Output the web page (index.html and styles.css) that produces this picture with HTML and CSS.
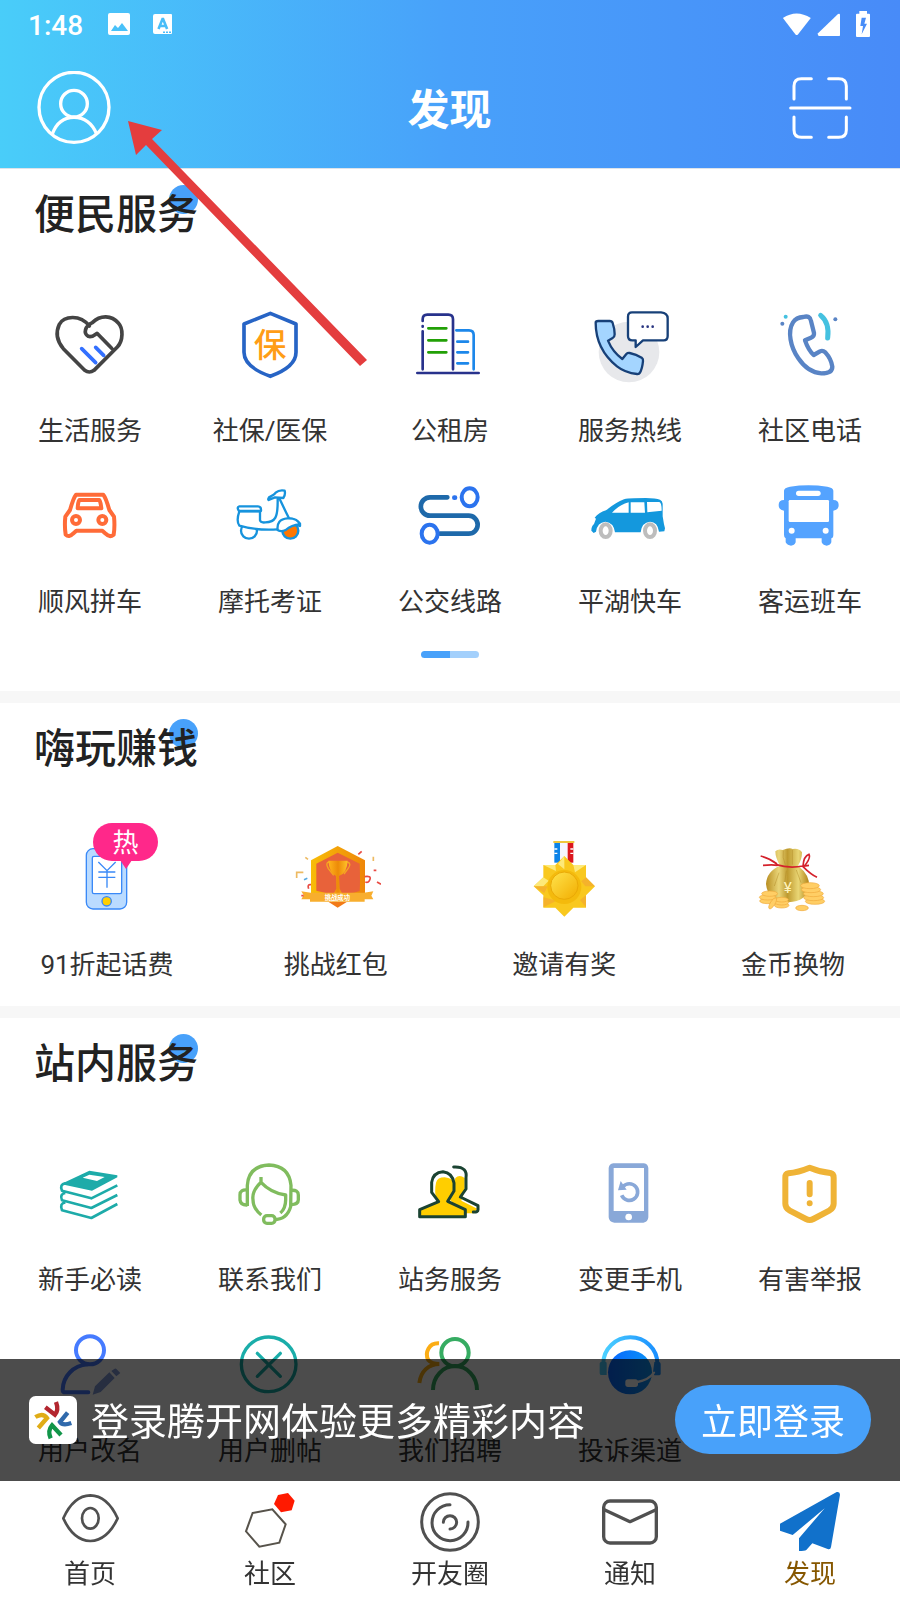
FILE: index.html
```
<!DOCTYPE html>
<html lang="zh-CN">
<head>
	<meta charset="utf-8">
	<title>发现</title>
	<meta name="viewport" content="width=device-width, initial-scale=1">
	<link rel="stylesheet" href="styles.css">
</head>
<body>
	<header class="top">
		<div class="status">
			<span class="clock">1:48</span>
			<svg class="status-icon" viewBox="0 0 24 24">
				<path fill="#fff" fill-rule="evenodd" d="M3 1h18a2 2 0 0 1 2 2v18a2 2 0 0 1-2 2H3a2 2 0 0 1-2-2V3a2 2 0 0 1 2-2zM4 19h17l-6-8-4 5-3-3z"/>
			</svg>
			<svg class="status-icon status-app" viewBox="0 0 24 24">
				<path fill="#fff" fill-rule="evenodd" d="M4 2h16a1 1 0 0 1 1 1v18a1 1 0 0 1-1 1H4a2 2 0 0 1-2-2V4a2 2 0 0 1 2-2zM12 19.500v1.500h2v-1.500zM15 19.500v1.500h2v-1.500zM18 19.500v1.500h2v-1.500z"/>
				<path fill="none" stroke="#49bdf8" stroke-width="2.600" d="M7.500 17L11.500 7h.6l4 10M9 14h6"/>
			</svg>
			<svg class="status-icon status-wifi" viewBox="992 30 96 80">
				<path fill="#fff" d="M993 50Q1038 20 1086 50L1043 105q-4 4-8 0z"/>
			</svg>
			<svg class="status-icon" viewBox="1101 36 72 72">
				<path fill="#fff" d="M1104 100l60-58q6-2 6 2v62q0 2-2 2h-62q-4-4-2-8z"/>
			</svg>
			<svg class="status-icon status-battery" viewBox="1215 28 48 82">
				<path fill="#fff" fill-rule="evenodd" d="M1228 30h23v8h6q3 0 3 3v64q0 3-3 3h-36q-3 0-3-3V41q0-3 3-3h7zM1235 50l-4 25h8l-4 25 16-32h-8l5-18z"/>
			</svg>
		</div>
		<div class="title-bar">
			<button class="icon-btn" aria-label="我的">
				<svg class="avatar" viewBox="112 213 222 222">
					<g fill="none" stroke="#fff" stroke-width="10">
						<circle cx="223" cy="322" r="105"/>
						<circle cx="223" cy="311" r="40"/>
						<path d="M158 402c12-33 36-50 65-50s54 17 68 50"/>
					</g>
				</svg>
			</button>
			<h1>发现</h1>
			<button class="icon-btn scan-btn" aria-label="扫一扫">
				<svg class="scan" viewBox="1014 229 192 192">
					<g fill="none" stroke="#fff" stroke-width="9" stroke-linecap="round">
						<path d="M1032 298v-39q0-22 22-22h30M1136 237h30q23 0 23 22v39M1032 352v39q0 22 22 22h30M1136 413h30q23 0 23-22v-39M1022 325h178"/>
					</g>
				</svg>
			</button>
		</div>
	</header>

	<main>
		<section class="panel">
			<h2>便民服务</h2>
			<div class="grid">
				<a class="item" href="#">
					<svg class="icon" viewBox="135 27 270 270">
						<g fill="none" stroke-width="11" stroke-linecap="round" stroke-linejoin="round">
							<path stroke="#3370ff" d="M245 176l42 42M287 172l24 24"/>
							<path stroke="#444" d="M268 108c-28-36-76-30-90-5-12 26-6 52 12 73l64 65q14 10 28 0l70-70c18-19 18-56 3-72-20-24-54-25-78-1-22 10-28 32-12 41 12 4 20-6 26-9l44 45"/>
						</g>
					</svg>
					<span>生活服务</span>
				</a>
				<a class="item" href="#">
					<svg class="icon" viewBox="675 27 270 270">
						<path fill="#fff" stroke="#2764c5" stroke-width="11" stroke-linejoin="round" d="M811 70l77 32v85q0 44-77 72-79-28-79-72v-85z"/>
						<text class="glyph glyph-bao" x="810" y="201">保</text>
					</svg>
					<span>社保/医保</span>
				</a>
				<a class="item" href="#">
					<svg class="icon" viewBox="15 -3 270 270">
						<g fill="none" stroke-width="8" stroke-linecap="round">
							<path stroke="#28328c" d="M68 63v-5q0-14 14-14h63q14 0 14 14v150M68 78v2M68 94v114M52 219h184"/>
							<path stroke="#22a006" d="M85 85h54M85 121h54M85 157h54"/>
							<path stroke="#1c87ea" d="M169 91h38q14 0 14 14v103M172 125h32M172 157h32M172 190h32"/>
						</g>
					</svg>
					<span>公租房</span>
				</a>
				<a class="item" href="#">
					<svg class="icon" viewBox="405 27 270 270">
						<circle cx="537" cy="186" r="91" fill="#e7e8eb"/>
						<g stroke="#174078" stroke-width="7" stroke-linejoin="round">
							<path fill="#a4d5ff" d="M437 98q0-5 8-5h34q7 0 9 6 6 18 6 34 0 8-6 11l-14 8q14 34 43 55l12-15q4-4 10-3 20 4 36 14 5 4 4 10-2 22-9 35-3 5-9 4-36-4-60-23-64-52-64-131z"/>
							<path fill="#fff" d="M546 67h87q20 2 20 18v53q0 13-12 13h-62l-22 20v-20h-10q-13 0-13-13V80q0-13 12-13z"/>
						</g>
						<path fill="none" stroke="#283480" stroke-width="8" stroke-linecap="round" d="M578 110h0M593 110h0M608 110h0"/>
					</svg>
					<span>服务热线</span>
				</a>
				<a class="item" href="#">
					<svg class="icon" viewBox="945 27 270 270">
						<g fill="none" stroke-linecap="round" stroke-linejoin="round">
							<path stroke="#5984c5" stroke-width="13" d="M1060 81q20-6 23 12l9 36q1 10-9 14l-18 8q10 29 26 44l19-11q8-4 16 3 18 20 21 43 0 20-33 20-40-2-69-45c-24-34-33-81-16-108 8-12 17-15 31-16z"/>
							<path stroke="#45c1e0" stroke-width="15" d="M1112 76q27 22 21 68"/>
						</g>
						<circle cx="1007" cy="80" r="6" fill="#45c1e0"/>
						<circle cx="997" cy="101" r="6" fill="#5984c5"/>
						<circle cx="1156" cy="88" r="6" fill="#5984c5"/>
					</svg>
					<span>社区电话</span>
				</a>
				<a class="item" href="#">
					<svg class="icon" viewBox="135 540 270 270">
						<g fill="none" stroke="#ff6b38" stroke-width="12" stroke-linejoin="round">
							<path d="M228 614h82q8 10 18 46l14 20q3 30-1 54-12 10-24-3l-10-9h-78l-10 9q-12 13-22 3-4-26-1-54l14-20q10-36 18-46z"/>
							<path d="M238 630h60q4 6 6 25h-71q1-19 5-25z"/>
							<circle cx="228" cy="690" r="12"/>
							<circle cx="307" cy="690" r="12"/>
						</g>
					</svg>
					<span>顺风拼车</span>
				</a>
				<a class="item" href="#">
					<svg class="icon" viewBox="675 540 270 270">
						<g fill="#fff" stroke="#1693dd" stroke-width="7" stroke-linejoin="round">
							<circle cx="747" cy="722" r="24"/>
							<circle cx="871" cy="722" r="24" fill="#ff7700"/>
							<path d="M718 664h62v27q2 8 16 6c30 0 38-14 37-70l5-2q18 38 29 60 20 2 33 16v7q-22-8-44 10l-23 0q-64 4-115-11-10-14 0-43z"/>
							<path d="M718 649h56q10 0 9 14h-66q-8-12 1-14zM806 630l19-8 25 2q7-10 4-22-17-3-27 6-4 6-20 14-4 6-1 8zM833 720q-4-32 29-35 32-1 37 18-24 1-42 17-14 7-24 0z"/>
						</g>
					</svg>
					<span>摩托考证</span>
				</a>
				<a class="item" href="#">
					<svg class="icon" viewBox="15 510 270 270">
						<g fill="none" stroke="#1e69aa" stroke-width="14" stroke-linecap="round">
							<path d="M142 592H90a27 27 0 0 0 0 55h116a27 27 0 0 1 0 54h-86"/>
							<g stroke="#2b73ee">
								<path d="M163 593h2"/>
								<ellipse cx="209" cy="592" rx="24" ry="27" stroke-width="12"/>
								<ellipse cx="89" cy="701" rx="24" ry="27" stroke-width="12"/>
							</g>
						</g>
					</svg>
					<span>公交线路</span>
				</a>
				<a class="item" href="#">
					<svg class="icon" viewBox="405 540 270 270">
						<path fill="#1498dd" d="M424 722q0-14 8-20l6-16-4-3q12-15 34-22 30-24 54-33 10-3 30-3 60-4 78 4 7 3 8 12v38l4 24 3 12-2 9-16 1q-4-30-27-30-25 2-28 32h-77q-4-30-29-32-24 2-28 30l-7 4z"/>
						<path fill="#fff" d="M486 668q22-24 50-31v31zM542 637h41l2 31h-43zM591 636h37q7 2 7 26l-43 5z"/>
						<g fill="#fff" stroke="#bdbdbd" stroke-width="12">
							<ellipse cx="467" cy="722" rx="15" ry="19"/>
							<ellipse cx="600" cy="722" rx="15" ry="19"/>
						</g>
					</svg>
					<span>平湖快车</span>
				</a>
				<a class="item" href="#">
					<svg class="icon" viewBox="945 540 270 270">
						<path fill="#54a3ff" d="M1002 602q0-9 18-12 55-8 112 0 18 3 18 12v28q16 0 16 15t-16 17v72q0 10-6 11v12q-4 10-14 10t-15-10v-12h-78v12q-4 10-14 10t-16-10v-12q-5-2-5-11v-72q-16-2-16-17t16-15z"/>
						<rect x="1038" y="602" width="74" height="16" rx="8" fill="#fff"/>
						<rect x="1016" y="630" width="121" height="66" rx="4" fill="#fff"/>
						<circle cx="1025" cy="722" r="9" fill="#fff"/>
						<circle cx="1127" cy="722" r="9" fill="#fff"/>
					</svg>
					<span>客运班车</span>
				</a>
			</div>
			<div class="pager"></div>
		</section>

		<section class="panel">
			<h2>嗨玩赚钱</h2>
			<div class="row">
				<a class="item" href="#">
					<svg class="icon" viewBox="186 639 270 270">
						<g stroke="#3a89f7" stroke-width="4">
							<rect x="259" y="686" width="121" height="181" rx="20" fill="#badbff"/>
							<rect x="277" y="709" width="88" height="112" rx="5" fill="#fff"/>
							<path fill="none" d="M295 726l26 26 26-26M321 752v51M295 756h51M295 772h51"/>
							<circle cx="320" cy="844" r="14" fill="#ffce00"/>
						</g>
					</svg>
					<span>91折起话费</span>
					<b class="hot">热</b>
				</a>
				<a class="item" href="#">
					<svg class="icon" viewBox="871 639 270 270">
						<defs>
							<linearGradient id="rim" x2="1"><stop stop-color="#f8bd08"/><stop offset="1" stop-color="#ee8609"/></linearGradient>
							<linearGradient id="cup" x2="1"><stop stop-color="#ffb51c"/><stop offset=".5" stop-color="#ed8a08"/><stop offset="1" stop-color="#ffc329"/></linearGradient>
						</defs>
						<path fill="#f27a17" d="M984 846h54l-27 17z"/>
						<path fill="url(#rim)" d="M1011 678l82 43v100H931V721z"/>
						<path fill="#e8623a" d="M1011 698l66 33q2 54 0 82-18 7-34 7h-64l-32-8v-81z"/>
						<path fill="none" stroke="#f5a522" stroke-width="4" d="M985 726q-12 2-2 20l16 20M1040 726q14 4 2 20l-12 16"/>
						<path fill="url(#cup)" d="M983 722h58q-2 38-26 46l2 38 8 16h-27l9-16-1-38q-20-10-23-46z"/>
						<path fill="#f8ae2e" d="M902 814l28 4h160l28-4-6 13 6 11h-26v7H928v-7h-26l7-12z"/>
						<text class="glyph glyph-ribbon" x="1010" y="840">挑战成功</text>
						<g fill="none" stroke-width="5">
							<path stroke="#e94b43" d="M1073 703l10-9M1119 751h8M1129 786l12 7M1092 770q20-3 16 8-4 12-14 8M931 794q-12-2-7 12M902 827h7"/>
							<path stroke="#edba62" d="M888 774v-17h20M914 712l8 6M1118 710v13"/>
							<path stroke="#57a9e0" d="M910 779l10-4"/>
						</g>
					</svg>
					<span>挑战红包</span>
				</a>
				<a class="item" href="#">
					<svg class="icon" viewBox="206 639 270 270">
						<defs>
							<linearGradient id="medal" x2="1" y2="1"><stop stop-color="#ffe34c"/><stop offset="1" stop-color="#f2ad00"/></linearGradient>
						</defs>
						<path fill="#0c83e8" d="M312 668h17v60h-17z"/>
						<path fill="#f6f4ff" d="M329 668h23v60h-23z"/>
						<path fill="#dc171e" d="M352 668h17v60h-17z"/>
						<path stroke="#fff" stroke-width="4" d="M312 687h9M312 700h9M360 687h9M360 700h9"/>
						<path stroke="#f0c63c" stroke-width="6" d="M309 666h63"/>
						<path fill="#f9c81e" d="M342 708l27 27h38v37l27 27-27 27v37h-38l-27 27-27-27h-36v-37l-29-27 29-27v-37h36z"/>
						<path fill="#fde979" d="M342 708v40l-19-16zM407 735l-33 22-5-22zM279 735l36 0 2 18zM279 772l16 10-16 17h-29z"/>
						<path fill="#f2a334" d="M407 772l-14 12 12 15h29zM279 862l0-30 40 10zM250 799h42l-10 20zM407 826l-18 14 18 22z" opacity=".6"/>
						<circle cx="342" cy="801" r="51" fill="#f4ba0c"/>
						<circle cx="342" cy="797" r="41" fill="url(#medal)" stroke="#eaa906" stroke-width="3"/>
					</svg>
					<span>邀请有奖</span>
				</a>
				<a class="item" href="#">
					<svg class="icon" viewBox="891 639 270 270">
						<defs>
							<linearGradient id="bag" x2="1"><stop stop-color="#b88e22"/><stop offset=".3" stop-color="#ead67a"/><stop offset=".5" stop-color="#bf9a2f"/><stop offset=".75" stop-color="#e9d675"/><stop offset="1" stop-color="#b18216"/></linearGradient>
						</defs>
						<path fill="url(#bag)" d="M973 694q8-8 22-4 20-8 30-3 20-3 28 10 0 22-12 40 36 28 33 62-6 46-62 48-62-2-67-55 2-38 42-55-14-24-14-43z"/>
						<path fill="none" stroke="#a9801c" stroke-width="2" d="M997 692q-4 20 6 42M1024 690v44M984 758l-14 40M1006 752l-5 38M1036 750l14 38" opacity=".6"/>
						<g fill="none" stroke="#d4222c" stroke-width="5">
							<path d="M976 734q38 12 80 4M980 736q-16-3-44 0M978 732q-20-16-49-24M1056 738q2-30 18-35 6 12-14 35l14-2M1056 740q24 24 42 32"/>
						</g>
						<text class="glyph glyph-yuan" x="1010" y="819">¥</text>
						<g fill="#ffce65" stroke="#f0ab3c" stroke-width="2">
							<ellipse cx="1092" cy="844" rx="29" ry="9"/><ellipse cx="1088" cy="833" rx="30" ry="9"/><ellipse cx="1087" cy="821" rx="30" ry="9"/><ellipse cx="1080" cy="809" rx="29" ry="9"/><ellipse cx="1077" cy="797" rx="28" ry="9"/>
							<ellipse cx="950" cy="843" rx="24" ry="8"/><ellipse cx="950" cy="832" rx="25" ry="8"/><ellipse cx="956" cy="821" rx="24" ry="8"/>
							<ellipse cx="992" cy="856" rx="22" ry="8"/><ellipse cx="992" cy="847" rx="21" ry="8"/><ellipse cx="992" cy="839" rx="20" ry="7"/>
							<ellipse cx="1053" cy="864" rx="19" ry="8"/>
							<ellipse cx="965" cy="850" rx="19" ry="7" transform="rotate(-58 965 850)"/>
						</g>
					</svg>
					<span>金币换物</span>
				</a>
			</div>
		</section>

		<section class="panel">
			<h2>站内服务</h2>
			<div class="grid">
				<a class="item" href="#">
					<svg class="icon" viewBox="135 444 270 270">
						<path fill="#1daba9" fill-rule="evenodd" d="M188 550l80-38 84 14v6l-76 40-84-18zM248 533l20-9 46 7-23 12z"/>
						<path fill="none" stroke="#1daba9" stroke-width="8" stroke-linejoin="round" d="M196 550q-18 3-10 22l88 23 78-39M196 579q-18 3-10 22l88 23 78-39M196 607q-18 3-10 24l88 23 78-42"/>
					</svg>
					<span>新手必读</span>
				</a>
				<a class="item" href="#">
					<svg class="icon" viewBox="675 444 270 270">
						<g fill="none" stroke="#80bc5e" stroke-width="10" stroke-linejoin="round">
							<path d="M742 618v-62q4-58 65-61 60 2 66 61l-1 64q-11 39-50 39"/>
							<path d="M742 570q-22-2-22 14v16q2 16 22 15M873 571q22-2 22 14v14q0 14-22 15"/>
							<path d="M784 645q-25-20-25-46-4-26 24-52v-16M783 547q30 32 74 38v14q0 26-16 40"/>
							<rect x="791" y="647" width="34" height="23" rx="10"/>
						</g>
					</svg>
					<span>联系我们</span>
				</a>
				<a class="item" href="#">
					<svg class="icon" viewBox="15 -6 270 270">
						<path fill="#ffce00" d="M166 84q12-12 28 0v40l-10 28 48 24-12 14h-30l-40-40z"/>
						<path fill="#ffce00" d="M108 98q4-16 26-16 24 2 26 18v30l-18 24 54 22v24H60v-24l50-20q-8-30-2-58z"/>
						<g fill="none" stroke="#1b4332" stroke-width="9" stroke-linejoin="round" stroke-linecap="round">
							<path d="M116 155l-21-28v-30q4-30 34-32 28 3 33 34v24l-19 31 53 25v21H59v-21z"/>
							<path d="M161 51c32-2 40 14 37 32v34l-17 24 53 26v12q0 8-14 7"/>
						</g>
					</svg>
					<span>站务服务</span>
				</a>
				<a class="item" href="#">
					<svg class="icon" viewBox="405 444 270 270">
						<path fill="#89a8d8" fill-rule="evenodd" d="M490 490h92q12 2 13 14v148q-1 14-15 16h-87q-16-2-17-16V504q1-12 14-14zM491 504v129h91V504z"/>
						<circle cx="536" cy="651" r="10" fill="#fff"/>
						<path fill="none" stroke="#89a8d8" stroke-width="11" d="M519 560a25 25 0 1 1-4 26"/>
						<path fill="#89a8d8" d="M512 543l-8 28 26-2z"/>
					</svg>
					<span>变更手机</span>
				</a>
				<a class="item" href="#">
					<svg class="icon" viewBox="945 444 270 270">
						<g fill="none" stroke="#efb336" stroke-width="18" stroke-linejoin="round" stroke-linecap="round">
							<path d="M1079 503q-34 14-64 17-9 1-9 13v78q0 12 12 20l50 26q11 6 22 0l49-26q12-8 12-20v-78q0-12-10-14-30-3-62-16z"/>
							<path d="M1079 549v34M1079 610h0"/>
						</g>
					</svg>
					<span>有害举报</span>
				</a>
				<a class="item" href="#">
					<svg class="icon" viewBox="135 27 270 270">
						<g fill="none" stroke="#467bff" stroke-width="12" stroke-linecap="round">
							<circle cx="270" cy="121" r="42"/>
							<path d="M263 163c-44 4-74 36-75 76q0 8 8 8h69"/>
						</g>
						<path fill="#839bd8" d="M285 229l43-42 16 17-42 42-24 8zM334 183l10-7q4-1 6 2l11 11-12 10z"/>
					</svg>
					<span>用户改名</span>
				</a>
				<a class="item" href="#">
					<svg class="icon" viewBox="675 27 270 270">
						<g fill="none" stroke="#1aada9" stroke-width="10" stroke-linecap="round">
							<circle cx="806" cy="163" r="82"/>
							<path d="M772 130l69 69M841 130l-69 69"/>
						</g>
					</svg>
					<span>用户删帖</span>
				</a>
				<a class="item" href="#">
					<svg class="icon" viewBox="15 507 270 270">
						<g fill="none" stroke-width="12">
							<path stroke="#fbad15" d="M117 580c-30-2-44 28-32 50q10 12 33 12c-32 0-56 22-60 57"/>
							<g stroke="#36ac62">
								<circle cx="165" cy="608" r="41"/>
								<path d="M99 720a66 72 0 0 1 132 0"/>
							</g>
						</g>
					</svg>
					<span>我们招聘</span>
				</a>
				<a class="item" href="#">
					<svg class="icon" viewBox="405 27 270 270">
						<defs>
							<linearGradient id="band" x2="1"><stop stop-color="#4cd0ff"/><stop offset="1" stop-color="#1a8fff"/></linearGradient>
							<linearGradient id="face" x2="1"><stop stop-color="#0866ff"/><stop offset="1" stop-color="#0b93f5"/></linearGradient>
						</defs>
						<path fill="none" stroke="url(#band)" stroke-width="12" d="M460 160a80 77 0 0 1 162 0"/>
						<path fill="url(#band)" d="M452 156h15q3 0 3 4v35h-18q-3-1-3-5v-30zM613 156h15q4 1 4 6v30q-1 4-5 4h-14l-4-10z"/>
						<circle cx="540" cy="187" r="66" fill="url(#face)"/>
						<path fill="none" stroke="#fff" stroke-width="7" stroke-linecap="round" d="M562 216q34-6 50-28"/>
						<rect x="526" y="208" width="38" height="23" rx="8" fill="#fff"/>
					</svg>
					<span>投诉渠道</span>
				</a>
			</div>
		</section>
	</main>

	<footer class="bottom">
		<div class="login-bar">
			<svg class="logo" viewBox="87 258 144 144">
				<rect x="87" y="258" width="144" height="144" rx="20" fill="#fff"/>
				<g fill="none" stroke-width="13">
					<path stroke="#b3262f" d="M136 292l29 22q12-14 3-38"/>
					<path stroke="#306aac" d="M203 308l-23 28q8 12 34 3"/>
					<path stroke="#119549" d="M183 375l-27-29q-14 16-4 39"/>
					<path stroke="#e0ac16" d="M115 354l26-30q-12-17-35-3"/>
				</g>
			</svg>
			<p>登录腾开网体验更多精彩内容</p>
			<button class="login-btn">立即登录</button>
		</div>
		<nav class="tabs">
			<a class="tab" href="#">
				<svg class="tab-icon" viewBox="180 546 180 180">
					<g fill="none" stroke="#505050" stroke-width="8">
						<path stroke-linejoin="round" d="M190 625q30-68 81-69 51 1 82 69-31 66-82 68-51-2-81-68z"/>
						<ellipse cx="271" cy="625" rx="25" ry="31"/>
					</g>
				</svg>
				<span>首页</span>
			</a>
			<a class="tab" href="#">
				<svg class="tab-icon" viewBox="720 546 180 180">
					<path fill="none" stroke="#57534b" stroke-width="6" d="M758 609l59-11 40 45-19 55-60 12-40-46z"/>
					<path fill="#ff1a00" d="M834 555l30-6 20 23-9 29-32 6-21-25z"/>
				</svg>
				<span>社区</span>
			</a>
			<a class="tab" href="#">
				<svg class="tab-icon" viewBox="60 1026 180 180">
					<g fill="none" stroke="#505050" stroke-width="9" stroke-linecap="round">
						<circle cx="150" cy="1116" r="85"/>
						<path d="M150 1064a54 54 0 1 0 54 52"/>
						<path d="M130 1117a20 20 0 1 1 20 20"/>
					</g>
				</svg>
				<span>开友圈</span>
			</a>
			<a class="tab" href="#">
				<svg class="tab-icon" viewBox="450 546 180 180">
					<g fill="none" stroke="#505050" stroke-width="10" stroke-linejoin="round">
						<rect x="461" y="573" width="158" height="126" rx="19"/>
						<path d="M463 599l77 36 78-36"/>
					</g>
				</svg>
				<span>通知</span>
			</a>
			<a class="tab active" href="#">
				<svg class="tab-icon" viewBox="990 546 180 180">
					<path fill="#1171cb" d="M990 641l170-95q10-1 10 8l-27 157q-1 8-8 7l-48-18-18 20q-5 3-22 3v-38l77-90-96 80-38-13z"/>
				</svg>
				<span>发现</span>
			</a>
		</nav>
	</footer>

	<!-- hint arrow, points at the avatar -->
	<svg class="arrow" viewBox="0 0 240 246">
		<path fill="#e43d3e" d="M0 0l34 9-10 9 215 221-7 6L18 24 8 34z"/>
	</svg>
</body>
</html>
```
FILE: styles.css
```
* {
	box-sizing: border-box;
}
body {
	margin: 0;
	background: #fff;
	color: #333;
	font-family: Roboto, "Noto Sans CJK SC", sans-serif;
	font-size: 26px;
	line-height: 36px;
}
a {
	color: inherit;
	text-decoration: none;
}
button {
	border: 0;
	padding: 0;
	background: none;
	color: inherit;
	font-family: inherit;
}
svg {
	display: block;
}
h1, h2, p {
	margin: 0;
}

/* header */
.top {
	background: linear-gradient(to right, #49cdf9, #48a1fa 50%, #488bf8);
	border-bottom: 1px solid #dde3ea;
	color: #fff;
}
.status {
	display: flex;
	align-items: center;
	height: 48px;
	padding: 0 29px 0 28px;
}
.clock {
	margin-right: 24px;
	padding-top: 3px;
	font-size: 28px;
	font-weight: 500;
}
.status-icon {
	width: 24px;
	height: 24px;
}
.status-app {
	margin-left: 20px;
}
.status-wifi {
	width: 32px;
	margin-left: auto;
	margin-right: 4px;
}
.status-battery {
	width: 16px;
	height: 28px;
	margin-left: 14px;
}
.title-bar {
	display: grid;
	grid-template-columns: 1fr auto 1fr;
	align-items: center;
	height: 120px;
	padding: 0 48px 0 37px;
}
.title-bar h1 {
	padding: 5px 0 0 10px;
	font-size: 42px;
	font-weight: 700;
	line-height: 60px;
}
.icon-btn {
	justify-self: start;
}
.scan-btn {
	justify-self: end;
}
.avatar {
	width: 74px;
	height: 74px;
}
.scan {
	width: 64px;
	height: 64px;
}

/* sections */
.panel {
	display: flow-root;
	padding-bottom: 23px;
}
.panel + .panel {
	border-top: 12px solid #f7f7f7;
}
.panel h2 {
	position: relative;
	z-index: 0;
	width: max-content;
	margin: 16px 0 54px 34px;
	color: #222;
	font-size: 41px;
	font-weight: 500;
	line-height: 60px;
}
.panel h2::after {
	content: "";
	position: absolute;
	z-index: -1;
	top: 0;
	right: 0;
	width: 29px;
	height: 29px;
	border-radius: 50%;
	background: #48a1fa;
}
.grid {
	display: grid;
	grid-template-columns: repeat(5, 1fr);
	row-gap: 21px;
}
.row {
	display: flex;
	justify-content: space-between;
	padding: 0 36px;
}
.item {
	position: relative;
	display: flex;
	flex-direction: column;
	align-items: center;
	gap: 24px;
	white-space: nowrap;
}
.row .item {
	width: 142px;
}
.icon {
	width: 90px;
	height: 90px;
}
.glyph {
	text-anchor: middle;
	font-weight: 700;
}
.glyph-bao {
	fill: #ff9d16;
	font-size: 98px;
	font-weight: 500;
}
.glyph-ribbon {
	fill: #fff;
	font-size: 19px;
}
.glyph-yuan {
	fill: #fff3bd;
	font-size: 46px;
	font-weight: 400;
}
.hot {
	position: absolute;
	top: -10px;
	left: 57px;
	width: 65px;
	height: 38px;
	border-radius: 19px;
	background: #ff288a;
	color: #fff;
	font-weight: 400;
	line-height: 40px;
	text-align: center;
}
.hot::after {
	content: "";
	position: absolute;
	top: 37px;
	left: 27px;
	border: 6px solid transparent;
	border-top: 9px solid #ff288a;
	border-bottom: 0;
}
.pager {
	width: 58px;
	height: 7px;
	margin: 31px auto 10px;
	border-radius: 4px;
	background: linear-gradient(to right, #48a1fa 50%, #a3d0fc 50%);
}

/* login bar + tabs, always at the bottom of the window */
.bottom {
	position: fixed;
	bottom: 0;
	left: 0;
	right: 0;
}
.login-bar {
	display: flex;
	align-items: center;
	height: 122px;
	padding: 0 29px;
	background: rgba(0, 0, 0, 0.7);
	color: #fff;
}
.logo {
	width: 48px;
	height: 48px;
	margin-right: 14px;
}
.login-bar p {
	flex: 1;
	padding-top: 3px;
	font-size: 38px;
	line-height: 56px;
	white-space: nowrap;
}
.login-btn {
	width: 196px;
	height: 69px;
	margin-bottom: 2px;
	border-radius: 35px;
	background: #48a1fa;
	font-size: 36px;
}
.tabs {
	display: grid;
	grid-template-columns: repeat(5, 1fr);
	padding: 11px 0 8px;
	background: #fff;
}
.tab {
	display: flex;
	flex-direction: column;
	align-items: center;
	gap: 4px;
}
.tab-icon {
	width: 60px;
	height: 60px;
}
.active {
	color: #865700;
}

.arrow {
	position: absolute;
	top: 121px;
	left: 128px;
	width: 240px;
	height: 246px;
	pointer-events: none;
}
```
